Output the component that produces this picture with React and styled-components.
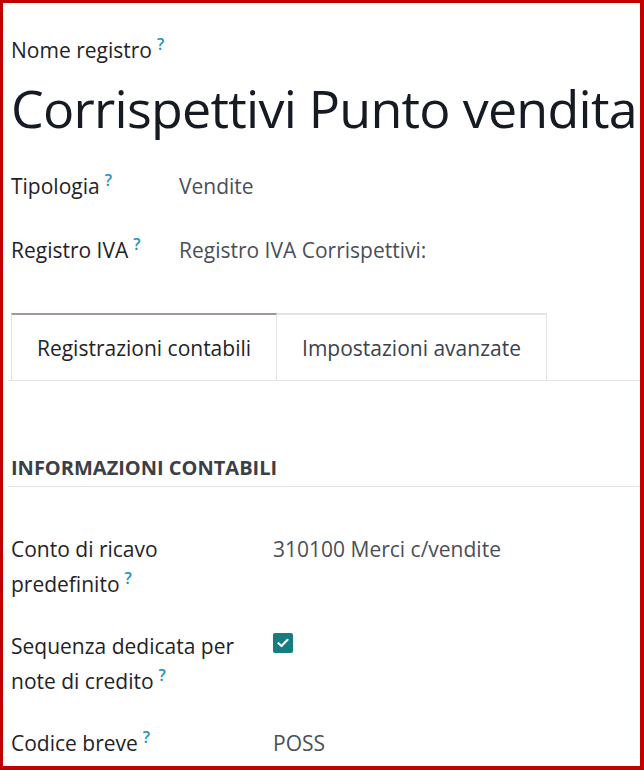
import React from "react";
import styled, { createGlobalStyle } from "styled-components";

const GlobalStyle = createGlobalStyle`
  html, body {
    margin: 0;
    padding: 0;
    background: #ffffff;
  }
  body {
    font-family: "Open Sans", "Noto Sans", sans-serif;
    color: #1f2328;
  }
`;

const Frame = styled.div`
  box-sizing: border-box;
  width: 644px;
  height: 770px;
  border-style: solid;
  border-color: #c30000;
  border-width: 3px 4px 4px 3px;
  overflow: hidden;
  background: #fff;
`;

const Sheet = styled.div`
  padding: 32px 0 0 5px;
`;

const Help = styled.sup`
  color: #2391b9;
  font-size: 16px;
  font-weight: 600;
  margin-left: 5px;
  vertical-align: top;
  position: relative;
  top: -6px;
`;

const NameLabel = styled.div`
  font-size: 21px;
  line-height: 30px;
  padding-left: 3px;
  color: #1f2328;
`;

const Title = styled.h1`
  margin: 10px 0 0;
  padding-left: 3px;
  font-size: 52px;
  font-weight: 400;
  letter-spacing: -0.75px;
  line-height: 66px;
  white-space: nowrap;
  color: #161a22;
`;

const FieldGrid = styled.div`
  display: grid;
  grid-template-columns: ${(p) => p.$labelWidth}px 1fr;
  row-gap: ${(p) => p.$gap}px;
  margin-top: ${(p) => p.$top}px;
  padding-left: 3px;
`;

const Label = styled.div`
  font-size: 21px;
  line-height: ${(p) => p.$lh || 40}px;
  color: #1f2328;
`;

const Value = styled.div`
  font-size: 21px;
  line-height: ${(p) => p.$lh || 40}px;
  color: #4a4f58;
`;

const TabBar = styled.div`
  display: flex;
  margin-top: 43px;
  border-bottom: 1px solid #e2e4e8;
  padding-left: 3px;
`;

const Tab = styled.div`
  box-sizing: border-box;
  height: 67px;
  width: ${(p) => p.$width}px;
  display: flex;
  align-items: center;
  justify-content: center;
  font-size: 21px;
  color: ${(p) => (p.$active ? "#1f2328" : "#3d424b")};
  border: 1px solid #e2e4e8;
  border-top: 2px solid ${(p) => (p.$active ? "#a4949d" : "#e2e4e8")};
  border-bottom: none;
  & + & {
    border-left: none;
  }
`;

const SectionTitle = styled.div`
  margin-top: 73px;
  padding: 0 0 4px 3px;
  font-size: 20px;
  font-weight: 700;
  line-height: 28px;
  color: #3b4048;
  border-bottom: 1px solid #e2e4e8;
`;

const Check = styled.div`
  width: 20px;
  height: 20px;
  margin-top: 4px;
  background: #147d82;
  border-radius: 2px;
  display: flex;
  align-items: center;
  justify-content: center;
`;

const HelpMark = () => <Help>?</Help>;

export default function App() {
  return (
    <>
      <GlobalStyle />
      <Frame>
        <Sheet>
          <NameLabel>
            Nome registro
            <HelpMark />
          </NameLabel>
          <Title>Corrispettivi Punto vendita</Title>

          <FieldGrid $labelWidth={168} $gap={24} $top={25}>
            <Label>
              Tipologia
              <HelpMark />
            </Label>
            <Value>Vendite</Value>
            <Label>
              Registro IVA
              <HelpMark />
            </Label>
            <Value>Registro IVA Corrispettivi:</Value>
          </FieldGrid>

          <TabBar>
            <Tab $active $width={266}>
              Registrazioni contabili
            </Tab>
            <Tab $width={270}>Impostazioni avanzate</Tab>
          </TabBar>

          <SectionTitle>INFORMAZIONI CONTABILI</SectionTitle>

          <FieldGrid $labelWidth={262} $gap={27} $top={45}>
            <Label $lh={35}>
              Conto di ricavo
              <br />
              predefinito
              <HelpMark />
            </Label>
            <Value $lh={35}>310100 Merci c/vendite</Value>
            <Label $lh={35}>
              Sequenza dedicata per
              <br />
              note di credito
              <HelpMark />
            </Label>
            <div>
              <Check>
                <svg width="12" height="10" viewBox="0 0 12 10">
                  <path
                    d="M1.5 5.2 L4.5 8 L10.5 1.8"
                    fill="none"
                    stroke="#fff"
                    strokeWidth="2.2"
                    strokeLinecap="round"
                    strokeLinejoin="round"
                  />
                </svg>
              </Check>
            </div>
            <Label $lh={35}>
              Codice breve
              <HelpMark />
            </Label>
            <Value $lh={35}>POSS</Value>
          </FieldGrid>
        </Sheet>
      </Frame>
    </>
  );
}
